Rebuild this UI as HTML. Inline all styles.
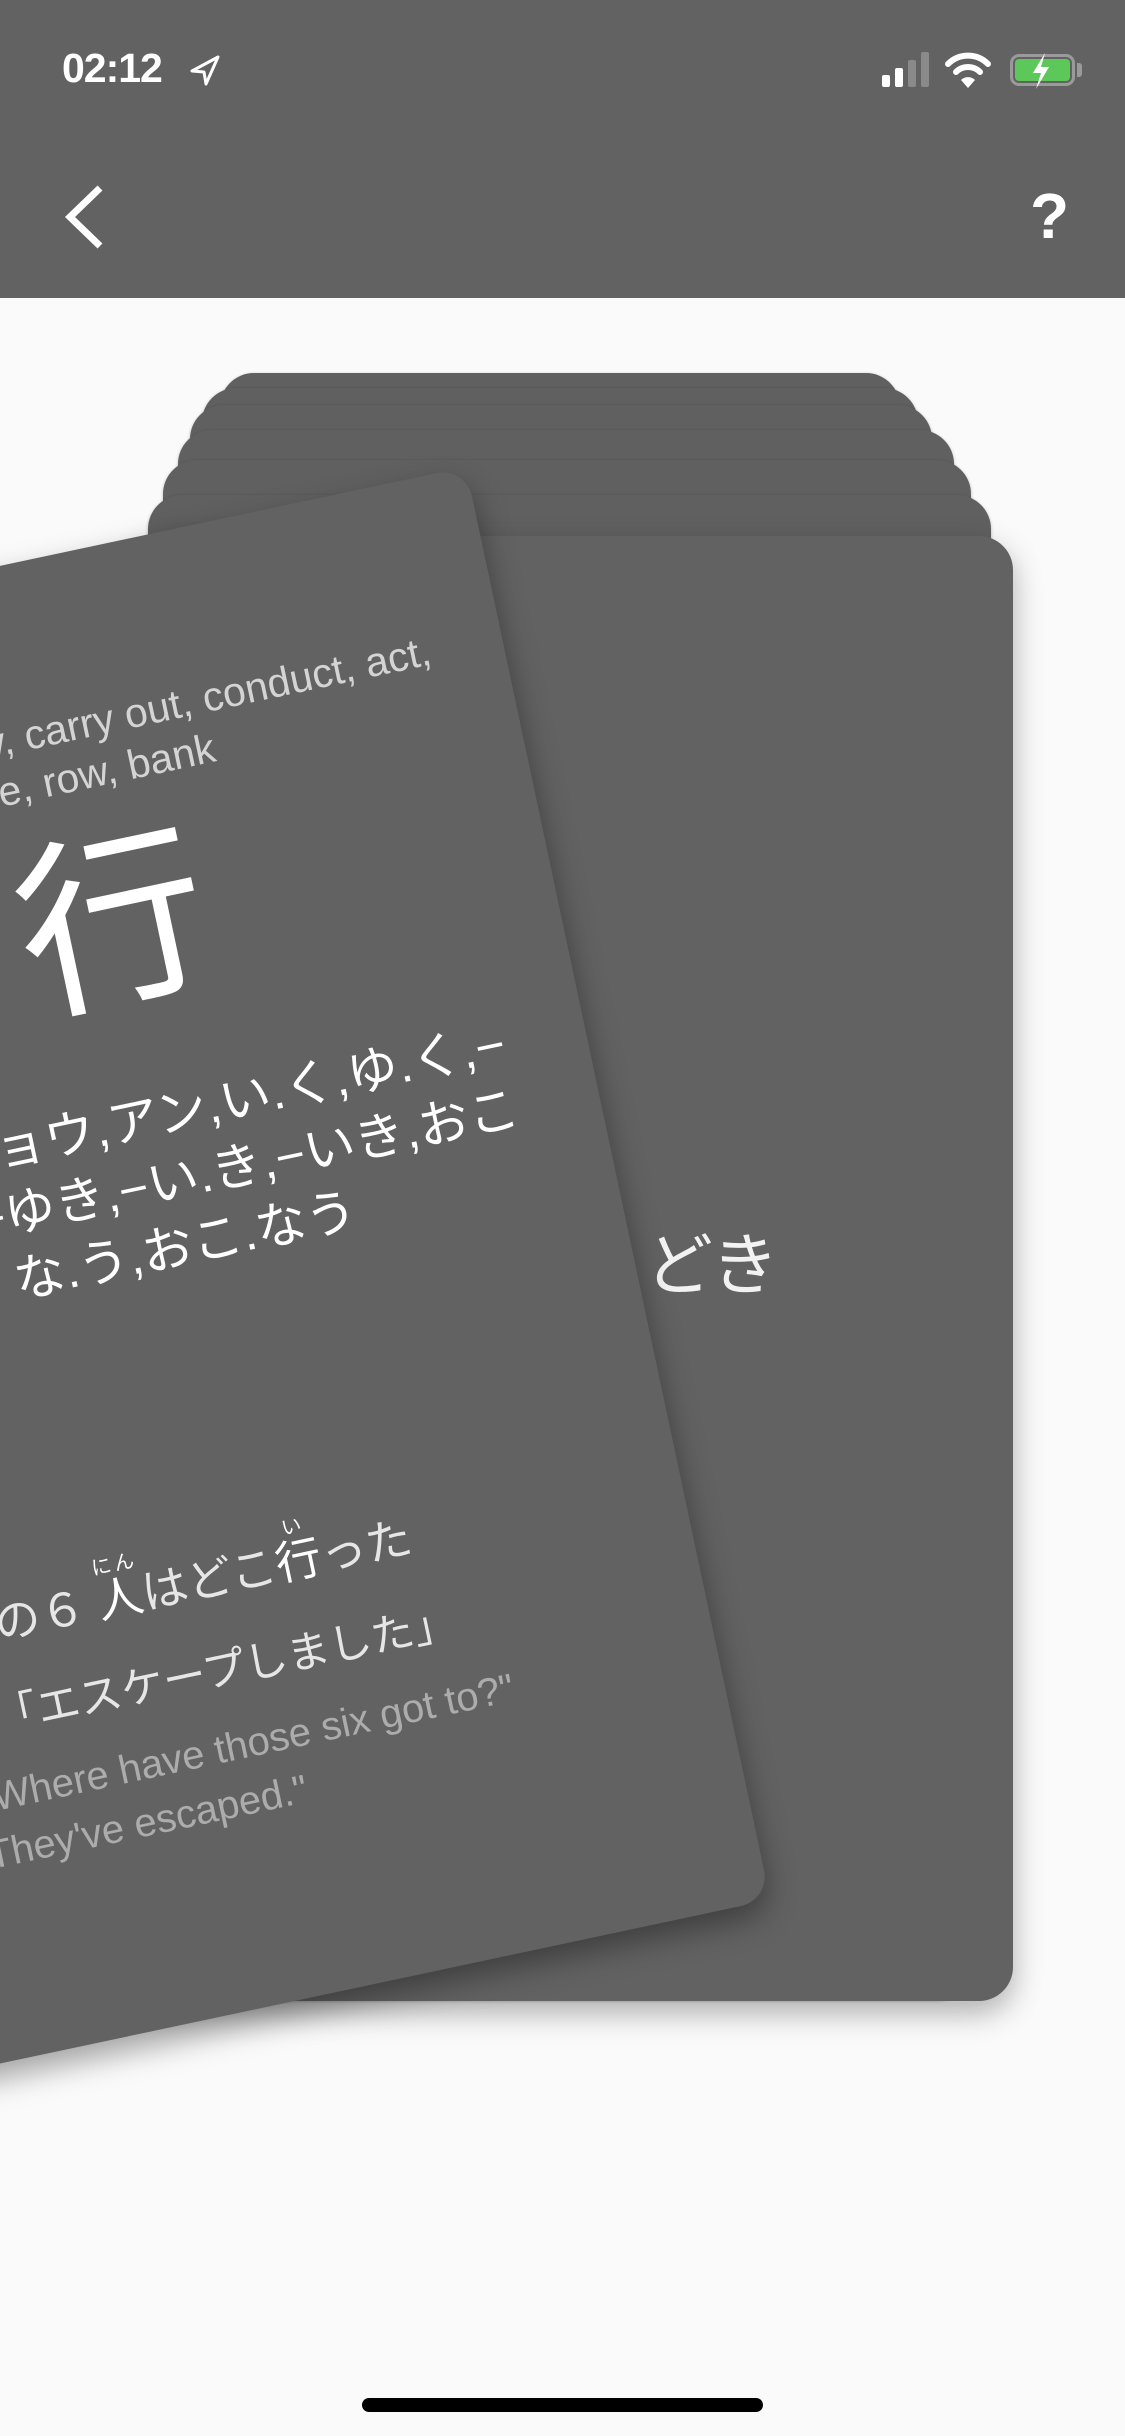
<!DOCTYPE html>
<html><head><meta charset="utf-8"><style>
*{margin:0;padding:0;box-sizing:border-box}
body{width:1125px;height:2436px;background:#fafafa;position:relative;overflow:hidden;font-family:"Liberation Sans","Noto Sans CJK JP",sans-serif}
.hdr{position:absolute;left:0;top:0;width:1125px;height:298px;background:#626262}
.l{position:absolute;border-radius:34px;background:#606060;box-shadow:0 1px 3px rgba(0,0,0,.25)}
.card{position:absolute;left:-396px;top:650px;width:881px;height:1465px;background:#626262;border-radius:30px;transform-origin:0 0;transform:rotate(-12deg);box-shadow:0 14px 30px rgba(0,0,0,.35)}
.t{position:absolute;white-space:nowrap;line-height:1}
rt{font-size:20px;color:#fff}
</style></head><body>
<div class="hdr">
 <div class="t" style="left:62px;top:48px;font-size:41px;color:#fff;font-weight:bold;letter-spacing:-1px">02:12</div>
 <svg style="position:absolute;left:188px;top:54px" width="34" height="34" viewBox="0 0 34 34"><path d="M30 3 L4 17 L16 18 L18 30 Z" fill="none" stroke="#fff" stroke-width="3" stroke-linejoin="round"/></svg>
 <div style="position:absolute;left:882px;top:75px;width:8px;height:12px;background:#fff;border-radius:2px"></div>
 <div style="position:absolute;left:895px;top:68px;width:8px;height:19px;background:#fff;border-radius:2px"></div>
 <div style="position:absolute;left:908px;top:60px;width:8px;height:27px;background:#8a8a8a;border-radius:2px"></div>
 <div style="position:absolute;left:921px;top:52px;width:8px;height:35px;background:#8a8a8a;border-radius:2px"></div>
 <svg style="position:absolute;left:945px;top:50px" width="46" height="40" viewBox="0 0 46 40"><path d="M3 14 A28 28 0 0 1 43 14" fill="none" stroke="#fff" stroke-width="6" stroke-linecap="round"/><path d="M11 22 A17 17 0 0 1 35 22" fill="none" stroke="#fff" stroke-width="6" stroke-linecap="round"/><path d="M23 38 L16 30 A10 10 0 0 1 30 30 Z" fill="#fff"/></svg>
 <div style="position:absolute;left:1010px;top:54px;width:65px;height:32px;border:3px solid #9a9a9a;border-radius:9px"></div>
 <div style="position:absolute;left:1015px;top:59px;width:55px;height:22px;background:#5cc85a;border-radius:4px"></div>
 <div style="position:absolute;left:1077px;top:63px;width:5px;height:14px;background:#9a9a9a;border-radius:0 3px 3px 0"></div>
 <svg style="position:absolute;left:1028px;top:52px" width="26" height="38" viewBox="0 0 26 38"><path d="M17 1 L5 21 L13 21 L8 37 L21 15 L13 15 Z" fill="#fff"/></svg>
 <svg style="position:absolute;left:62px;top:184px" width="46" height="66" viewBox="0 0 46 66"><path d="M38 4 L8 33 L38 62" fill="none" stroke="#fff" stroke-width="7"/></svg>
 <div class="t" style="left:1030px;top:184px;font-size:64px;color:#fff;font-weight:bold">?</div>
</div>

<div class="l" style="left:220px;top:373px;width:680px;height:1580px"></div>
<div class="l" style="left:202px;top:388px;width:716px;height:1570px"></div>
<div class="l" style="left:190px;top:405px;width:742px;height:1560px"></div>
<div class="l" style="left:178px;top:430px;width:776px;height:1560px"></div>
<div class="l" style="left:163px;top:460px;width:808px;height:1540px"></div>
<div class="l" style="left:148px;top:495px;width:843px;height:1500px"></div>
<div class="l" style="left:132px;top:536px;width:881px;height:1465px;background:#626262;box-shadow:0 12px 30px rgba(0,0,0,.3)"></div>
<div class="t" style="left:645px;top:1232px;font-size:68px;color:#f2f2f2">どき</div>

<div class="card">
 <div class="t" style="right:73px;top:152px;font-size:41px;color:#d4d4d4">going, journey, carry out, conduct, act,</div>
 <div class="t" style="right:304px;top:202px;font-size:41px;color:#d4d4d4">line, row, bank</div>
 <div class="t" style="left:0;width:881px;text-align:center;top:280px;font-size:190px;color:#fff">行</div>
 <div class="t" style="right:82px;top:546px;font-size:51px;color:#fff">コウ,ギョウ,アン,い.く,ゆ.く,−</div>
 <div class="t" style="right:82px;top:612px;font-size:51px;color:#fff">ゆ.き,−ゆき,−い.き,−いき,おこ</div>
 <div class="t" style="right:262px;top:678px;font-size:51px;color:#fff">な.う,おこ.なう</div>
 <div class="t" style="right:276px;top:990px;font-size:46px;line-height:1.2;color:#e6e6e6">「あの６ <ruby style="color:#fff">人<rt>にん</rt></ruby>はどこ<ruby style="color:#fff">行<rt>い</rt></ruby>った</div>
 <div class="t" style="right:250px;top:1106px;font-size:43px;color:#e6e6e6">「エスケープしました」</div>
 <div class="t" style="right:207px;top:1184px;font-size:40px;color:#acacac">"Where have those six got to?"</div>
 <div class="t" style="right:430px;top:1240px;font-size:40px;color:#acacac">"They've escaped."</div>
</div>

<div style="position:absolute;left:362px;top:2398px;width:401px;height:14px;background:#000;border-radius:7px"></div>
</body></html>
